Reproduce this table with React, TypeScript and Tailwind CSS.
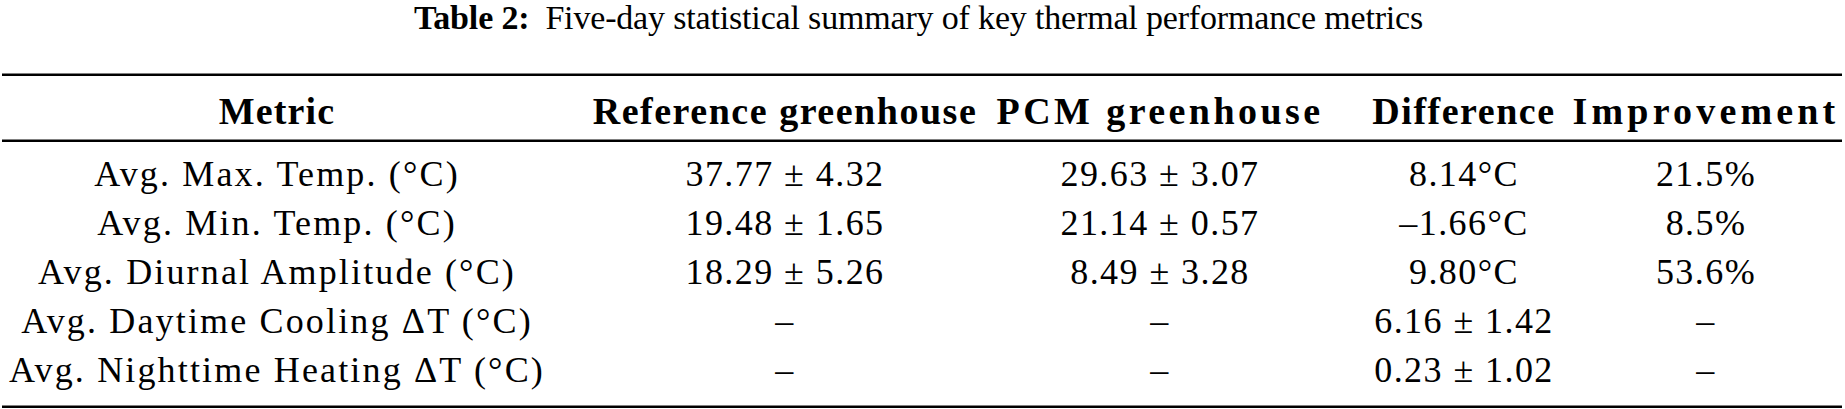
import React from "react";

const rows: string[][] = [
  ["Avg. Max. Temp. (°C)", "37.77 ± 4.32", "29.63 ± 3.07", "8.14°C", "21.5%"],
  ["Avg. Min. Temp. (°C)", "19.48 ± 1.65", "21.14 ± 0.57", "–1.66°C", "8.5%"],
  ["Avg. Diurnal Amplitude (°C)", "18.29 ± 5.26", "8.49 ± 3.28", "9.80°C", "53.6%"],
  ["Avg. Daytime Cooling ΔT (°C)", "–", "–", "6.16 ± 1.42", "–"],
  ["Avg. Nighttime Heating ΔT (°C)", "–", "–", "0.23 ± 1.02", "–"],
];

const headers = ["Metric", "Reference greenhouse", "PCM greenhouse", "Difference", "Improvement"];
const headerTracking = [
  "tracking-[0.03em]",
  "tracking-[0.04em]",
  "tracking-[0.09em]",
  "tracking-[0.04em]",
  "tracking-[0.11em]",
];

const widths = ["w-[550px]", "w-[466px]", "w-[284px]", "w-[324px]", "w-[160px]"];

function Rule() {
  return (
    <div className="flex flex-col">
      <div className="h-[1px] bg-[#808080]" />
      <div className="h-[2px] bg-black" />
    </div>
  );
}

export default function App() {
  return (
    <div
      className="w-[1845px] h-[409px] bg-white text-black overflow-hidden"
      style={{ fontFamily: '"Liberation Serif", "Times New Roman", serif' }}
    >
      <div className="h-[73px] flex justify-center pr-[8px] text-[34px] leading-[36px] tracking-[-0.005em]">
        <span className="font-bold">Table 2:</span>
        <span className="ml-[16px]">Five-day statistical summary of key thermal performance metrics</span>
      </div>
      <div className="ml-[2px] w-[1840px]">
        <Rule />
        <div className="flex h-[63px] items-center pt-[8px] text-[38px] font-bold">
          {headers.map((h, i) => (
            <div key={i} className={`${widths[i]} ${headerTracking[i]} shrink-0 flex justify-center whitespace-nowrap`}>
              {h}
            </div>
          ))}
        </div>
        <Rule />
        <div className="flex flex-col pt-[8px] text-[36px] leading-[49px] tracking-[0.04em]">
          {rows.map((r, ri) => (
            <div key={ri} className="flex">
              {r.map((c, ci) => (
                <div
                  key={ci}
                  className={`${widths[ci]} shrink-0 flex justify-center whitespace-nowrap ${ci === 0 ? "tracking-[0.06em]" : ""}`}
                >
                  {c}
                </div>
              ))}
            </div>
          ))}
        </div>
        <div className="h-[10px]" />
        <Rule />
      </div>
    </div>
  );
}
